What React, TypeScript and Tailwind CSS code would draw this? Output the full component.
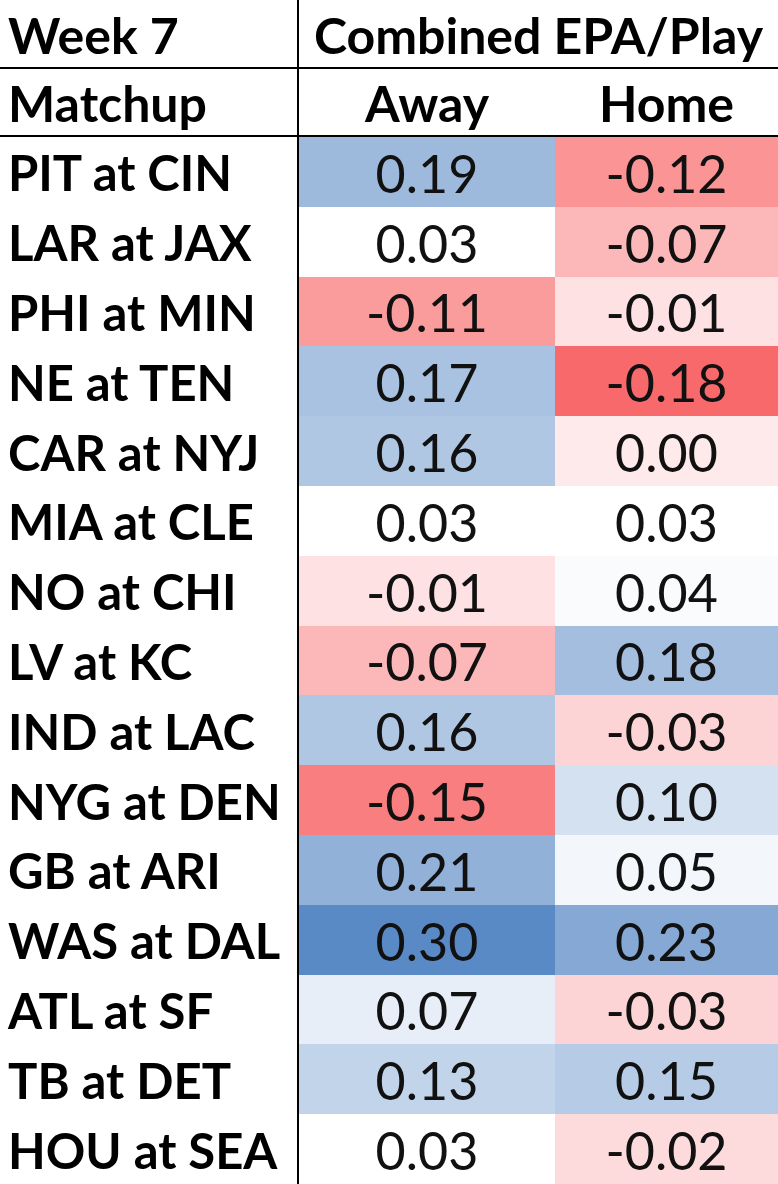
const ROWS: [string, number, number][] = [
  ["PIT at CIN", 0.19, -0.12],
  ["LAR at JAX", 0.03, -0.07],
  ["PHI at MIN", -0.11, -0.01],
  ["NE at TEN", 0.17, -0.18],
  ["CAR at NYJ", 0.16, 0.0],
  ["MIA at CLE", 0.03, 0.03],
  ["NO at CHI", -0.01, 0.04],
  ["LV at KC", -0.07, 0.18],
  ["IND at LAC", 0.16, -0.03],
  ["NYG at DEN", -0.15, 0.1],
  ["GB at ARI", 0.21, 0.05],
  ["WAS at DAL", 0.3, 0.23],
  ["ATL at SF", 0.07, -0.03],
  ["TB at DET", 0.13, 0.15],
  ["HOU at SEA", 0.03, -0.02],
];

// 3-colour scale: min red, median white, max blue
const MIN = -0.18;
const MID = 0.03;
const MAX = 0.3;
const RED = [248, 105, 107];
const BLUE = [90, 138, 198];

function heat(v: number) {
  let c = [255, 255, 255];
  let t = 0;
  if (v < MID) {
    t = Math.min(1, (MID - v) / (MID - MIN));
    c = RED;
  } else {
    t = Math.min(1, (v - MID) / (MAX - MID));
    c = BLUE;
  }
  const mix = c.map((x) => Math.round(255 + (x - 255) * t));
  return `rgb(${mix[0]}, ${mix[1]}, ${mix[2]})`;
}

function fmt(v: number) {
  return v.toFixed(2);
}

export default function App() {
  return (
    <div
      className="flex h-[1184px] w-[778px] flex-col bg-white text-black"
      style={{ fontFamily: "Lato, 'Open Sans', sans-serif" }}
    >
      {/* header row 1 */}
      <div className="flex h-[69px] shrink-0 border-b-2 border-black">
        <div className="flex w-[299px] items-center border-r-2 border-black pl-[8px] pt-[3px] text-[50px] font-bold leading-none">
          Week 7
        </div>
        <div className="flex flex-1 items-center justify-center pt-[3px] text-[50px] font-bold leading-none">
          Combined EPA/Play
        </div>
      </div>

      {/* header row 2 */}
      <div className="flex h-[68px] shrink-0 border-b-2 border-black">
        <div className="flex w-[299px] items-center border-r-2 border-black pl-[8px] pt-[2px] text-[50px] font-bold leading-none">
          Matchup
        </div>
        <div className="flex w-[256px] items-center justify-center pt-[2px] text-[50px] font-bold leading-none">
          Away
        </div>
        <div className="flex flex-1 items-center justify-center pt-[2px] text-[50px] font-bold leading-none">
          Home
        </div>
      </div>

      {/* data rows */}
      {ROWS.map(([game, away, home]) => (
        <div key={game} className="flex min-h-0 flex-1">
          <div className="flex w-[299px] items-center border-r-2 border-black pl-[8px] pt-[2px] text-[49px] font-bold leading-none">
            {game}
          </div>
          <div
            className="flex w-[256px] items-center justify-center pt-[2px] text-[52px] leading-none text-[#111]"
            style={{ backgroundColor: heat(away) }}
          >
            {fmt(away)}
          </div>
          <div
            className="flex flex-1 items-center justify-center pt-[2px] text-[52px] leading-none text-[#111]"
            style={{ backgroundColor: heat(home) }}
          >
            {fmt(home)}
          </div>
        </div>
      ))}
    </div>
  );
}
